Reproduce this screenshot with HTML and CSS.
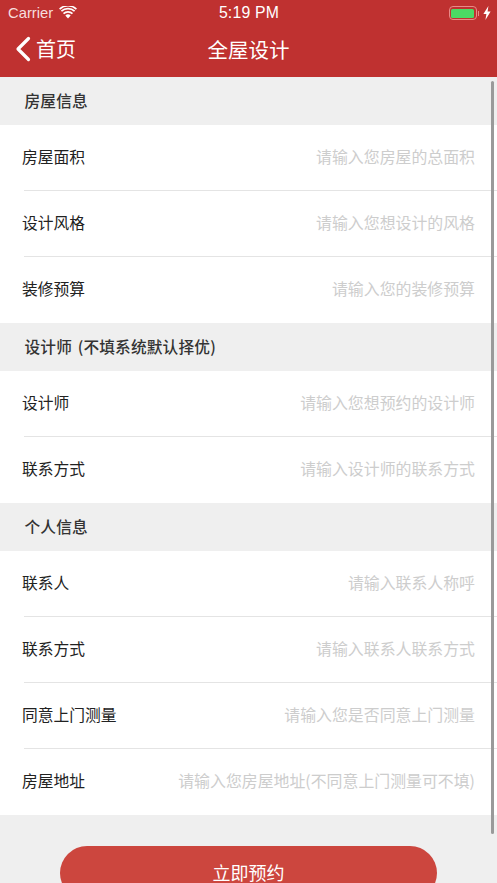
FILE: index.html
```html
<!DOCTYPE html>
<html lang="zh">
<head>
<meta charset="utf-8">
<title>全屋设计</title>
<link rel="stylesheet" href="styles.css">
</head>
<body>
<header class="top">
  <div class="status">
    <div class="status-left">
      <span>Carrier</span>
      <svg class="wifi" viewBox="0 0 18 13" width="18" height="13"><path d="M9 12.6 6.3 9.6a3.9 3.9 0 0 1 5.4 0Z" fill="#fff"/><path d="M4.5 7.6a6.6 6.6 0 0 1 9 0M2.4 5.2A9.6 9.6 0 0 1 15.6 5.2" fill="none" stroke="#fff" stroke-width="1.7"/><path d="M.6 3.1a12.4 12.4 0 0 1 16.8 0" fill="none" stroke="#fff" stroke-width="1.6"/></svg>
    </div>
    <span class="clock">5:19 PM</span>
    <div class="status-right">
      <span class="battery"><span class="battery-fill"></span></span>
      <span class="battery-cap"></span>
      <svg class="bolt" viewBox="0 0 8 14" width="8" height="14"><path d="M5.4 0 .4 8h3L2.4 14 7.6 5.6h-3Z" fill="#fff"/></svg>
    </div>
  </div>
  <div class="nav">
    <div class="back">
      <svg class="chevron" viewBox="0 0 16 26" width="16" height="26"><path d="M13.5 2.5 3 13l10.5 10.5" fill="none" stroke="#fff" stroke-width="3.2" stroke-linecap="round" stroke-linejoin="round"/></svg>
      <span>首页</span>
    </div>
    <h1 class="title">全屋设计</h1>
  </div>
</header>
<main class="content">
  <h2 class="section">房屋信息</h2>
  <div class="row"><span class="label">房屋面积</span><span class="hint">请输入您房屋的总面积</span></div>
  <div class="row"><span class="label">设计风格</span><span class="hint">请输入您想设计的风格</span></div>
  <div class="row"><span class="label">装修预算</span><span class="hint">请输入您的装修预算</span></div>
  <h2 class="section">设计师 (不填系统默认择优)</h2>
  <div class="row"><span class="label">设计师</span><span class="hint">请输入您想预约的设计师</span></div>
  <div class="row"><span class="label">联系方式</span><span class="hint">请输入设计师的联系方式</span></div>
  <h2 class="section">个人信息</h2>
  <div class="row"><span class="label">联系人</span><span class="hint">请输入联系人称呼</span></div>
  <div class="row"><span class="label">联系方式</span><span class="hint">请输入联系人联系方式</span></div>
  <div class="row"><span class="label">同意上门测量</span><span class="hint">请输入您是否同意上门测量</span></div>
  <div class="row"><span class="label">房屋地址</span><span class="hint">请输入您房屋地址(不同意上门测量可不填)</span></div>
  <div class="actions"><button class="submit" type="button">立即预约</button></div>
</main>
<div class="scrollbar"></div>
</body>
</html>
```
FILE: styles.css
```css
* { box-sizing: border-box; }
html, body { margin: 0; height: 883px; overflow: hidden; }
body {
  position: relative;
  background: #efefef;
  font-family: "Noto Sans CJK SC", "Liberation Sans", sans-serif;
  color: #222;
}
.top { height: 77px; background: #bf3130; color: #fff; }
.status {
  height: 26px;
  display: grid;
  grid-template-columns: 1fr auto 1fr;
  align-items: center;
  padding: 0 6px 0 8px;
  font-family: "Liberation Sans", sans-serif;
  font-size: 14.8px;
}
.status-left { display: flex; align-items: center; gap: 6px; color: #f6dede; }
.wifi { margin-top: -2px; }
.clock { font-size: 15.8px; font-weight: 500; letter-spacing: .2px; margin-left: -1px; }
.status-right { display: flex; align-items: center; justify-content: flex-end; }
.battery {
  width: 28px; height: 14px;
  border: 1px solid #e88a88;
  border-radius: 4px;
  padding: 1.5px;
  display: block;
}
.battery-fill { display: block; height: 100%; background: #4cd964; border-radius: 1.5px; }
.battery-cap { width: 1.5px; height: 5px; background: #e88a88; margin: 0 4px 0 1px; }
.nav { height: 51px; position: relative; display: flex; align-items: center; justify-content: center; padding-bottom: 6px; }
.back { position: absolute; left: 15px; top: 10px; display: flex; align-items: center; gap: 5px; font-size: 20px; line-height: 26px; }
.title { margin: 0; font-size: 20.5px; font-weight: 400; line-height: 28px; }
.section {
  margin: 0;
  height: 48px;
  padding-left: 24.5px;
  padding-bottom: 2px;
  display: flex;
  align-items: center;
  font-size: 15.7px;
  font-weight: 500;
  color: #333;
  word-spacing: 2px;
  letter-spacing: .15px;
}
.row {
  height: 66px;
  background: #fff;
  display: flex;
  align-items: center;
  justify-content: space-between;
  padding: 0 22px 3px;
  position: relative;
  font-size: 15.75px;
}
.row + .row::before {
  content: "";
  position: absolute;
  left: 24px; right: 0; top: -1px;
  height: 1px;
  background: #e4e4e4;
}
.label { color: #222; }
.hint { color: #cdcdcd; font-size: 15.9px; }
.actions { padding: 31px 60px 0; }
.submit {
  display: block;
  width: 100%;
  height: 54px;
  border: 0;
  border-radius: 27px;
  padding: 0 0 3px;
  background: #cc463e;
  color: #fff;
  font: inherit;
  font-size: 18px;
}
.scrollbar {
  position: absolute;
  left: 491px; top: 81px;
  width: 3px; height: 753px;
  border-radius: 2px;
  background: #9a9a9a;
}
```
